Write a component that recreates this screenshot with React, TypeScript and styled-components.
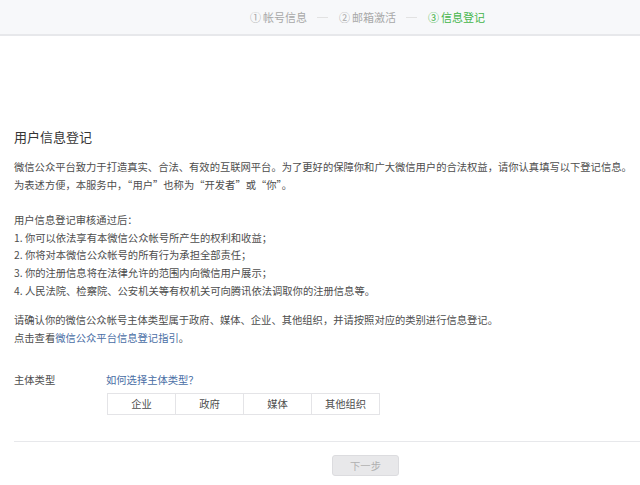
import React from "react";
import styled, { createGlobalStyle } from "styled-components";

const Global = createGlobalStyle`
  html, body { margin: 0; padding: 0; background: #fff; }
  body { font-family: "Noto Sans CJK SC", "Noto Sans", sans-serif; color: #4d4d4d; }
`;

const Header = styled.header`
  height: 34px;
  background: #f7f8fa;
  border-bottom: 2px solid #e7e8eb;
  display: flex;
  align-items: center;
  padding-left: 250px;
`;

const Step = styled.div<{ $active?: boolean }>`
  display: flex;
  align-items: center;
  font-size: 11px;
  line-height: 14px;
  color: ${(p) => (p.$active ? "#44b549" : "#a8a8a8")};
`;

const StepNum = styled.span`
  margin-right: 2px;
`;

const Dash = styled.span`
  display: block;
  width: 11px;
  height: 1px;
  background: #e2e2e2;
  margin: 0 11px 0 10px;
`;

const Main = styled.main`
  padding-left: 14px;
  padding-top: 92px;
`;

const Title = styled.h2`
  margin: 0;
  font-size: 13px;
  line-height: 18px;
  font-weight: normal;
  color: #353535;
`;

const Para = styled.p<{ $top: number }>`
  margin: ${(p) => p.$top}px 0 0;
  font-size: 10.3px;
  line-height: 17.6px;
  color: #4d4d4d;
`;

const Link = styled.a`
  color: #4a6ea5;
  text-decoration: none;
`;

const FormRow = styled.div`
  display: grid;
  grid-template-columns: 92px auto;
  margin-top: 25px;
  font-size: 10.3px;
  line-height: 17.6px;
`;

const Label = styled.div`
  color: #4d4d4d;
`;

const Field = styled.div`
  display: flex;
  flex-direction: column;
  align-items: flex-start;
`;

const Choices = styled.div`
  display: flex;
  margin-top: 4px;
  margin-left: 1px;
  border-top: 1px solid #e4e4e7;
  border-left: 1px solid #e4e4e7;
`;

const Choice = styled.div`
  width: 67px;
  height: 20px;
  display: flex;
  align-items: center;
  justify-content: center;
  border-right: 1px solid #e4e4e7;
  border-bottom: 1px solid #e4e4e7;
  color: #4d4d4d;
  font-size: 10.3px;
`;

const Divider = styled.hr`
  margin: 26px 0 0;
  border: none;
  border-top: 1px solid #e7e8eb;
  height: 0;
`;

const Footer = styled.div`
  display: flex;
  padding-left: 318px;
  margin-top: 13px;
`;

const Button = styled.button`
  width: 67px;
  height: 21px;
  border: 1px solid #dcdcdf;
  border-radius: 3px;
  background: #e8e8ea;
  color: #b0b0b0;
  font-family: inherit;
  font-size: 10.3px;
  padding: 0;
`;

export default function App() {
  const steps = ["帐号信息", "邮箱激活", "信息登记"];
  const nums = ["①", "②", "③"];
  return (
    <>
      <Global />
      <Header>
        {steps.map((s, i) => (
          <React.Fragment key={s}>
            {i > 0 && <Dash />}
            <Step $active={i === 2}>
              <StepNum>{nums[i]}</StepNum>
              {s}
            </Step>
          </React.Fragment>
        ))}
      </Header>
      <Main>
        <Title>用户信息登记</Title>
        <Para $top={12}>
          微信公众平台致力于打造真实、合法、有效的互联网平台。为了更好的保障你和广大微信用户的合法权益，请你认真填写以下登记信息。
          <br />
          为表述方便，本服务中，“用户”也称为“开发者”或“你”。
        </Para>
        <Para $top={18}>
          用户信息登记审核通过后：
          <br />
          1. 你可以依法享有本微信公众帐号所产生的权利和收益；
          <br />
          2. 你将对本微信公众帐号的所有行为承担全部责任；
          <br />
          3. 你的注册信息将在法律允许的范围内向微信用户展示；
          <br />
          4. 人民法院、检察院、公安机关等有权机关可向腾讯依法调取你的注册信息等。
        </Para>
        <Para $top={12}>
          请确认你的微信公众帐号主体类型属于政府、媒体、企业、其他组织，并请按照对应的类别进行信息登记。
          <br />
          点击查看<Link href="#">微信公众平台信息登记指引</Link>。
        </Para>
        <FormRow>
          <Label>主体类型</Label>
          <Field>
            <Link href="#">如何选择主体类型？</Link>
            <Choices>
              {["企业", "政府", "媒体", "其他组织"].map((c) => (
                <Choice key={c}>{c}</Choice>
              ))}
            </Choices>
          </Field>
        </FormRow>
        <Divider />
        <Footer>
          <Button>下一步</Button>
        </Footer>
      </Main>
    </>
  );
}
